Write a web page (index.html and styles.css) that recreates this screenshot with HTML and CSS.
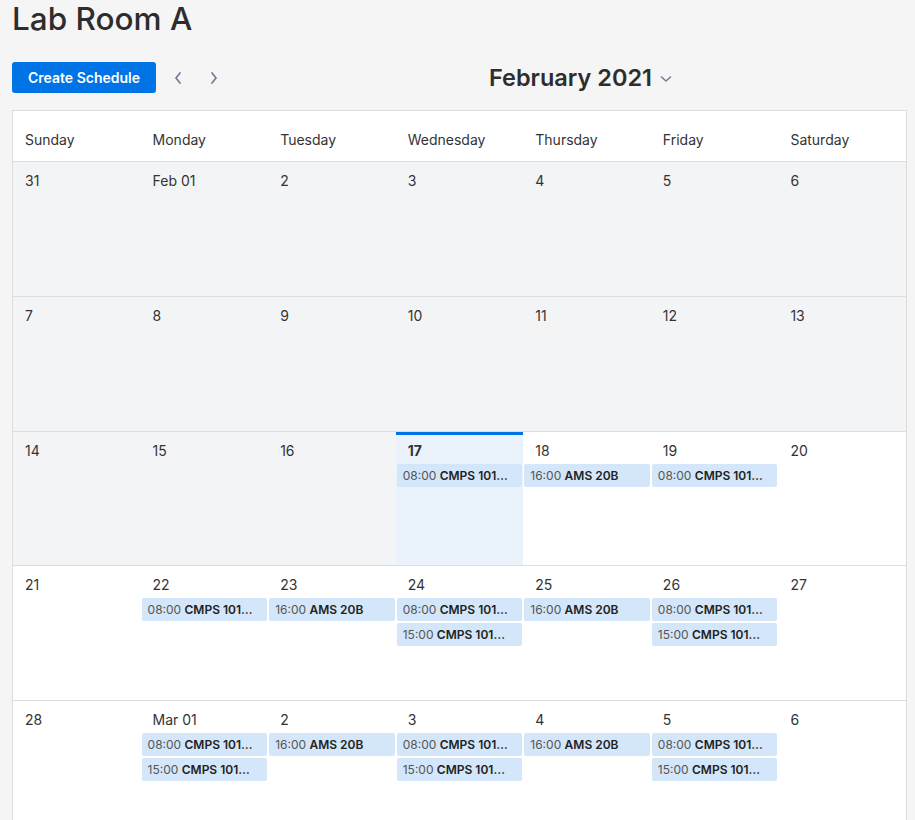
FILE: index.html
```html
<!DOCTYPE html>
<html>
<head>
<meta charset="utf-8">
<link rel="stylesheet" href="styles.css">
</head>
<body>
<h1 class="title">Lab Room A</h1>
<div class="toolbar">
  <button class="btn-primary">Create Schedule</button>
  <button class="nav-btn" aria-label="Previous"><svg width="10" height="14" viewBox="0 0 10 14"><path d="M7 2 L3 7 L7 12" fill="none" stroke="#767d97" stroke-width="1.8" stroke-linecap="round" stroke-linejoin="round"/></svg></button>
  <button class="nav-btn" aria-label="Next"><svg width="10" height="14" viewBox="0 0 10 14"><path d="M3 2 L7 7 L3 12" fill="none" stroke="#767d97" stroke-width="1.8" stroke-linecap="round" stroke-linejoin="round"/></svg></button>
  <div class="month">February 2021 <svg class="caret" width="14" height="10" viewBox="0 0 14 10"><path d="M2.5 3 L7 7 L11.5 3" fill="none" stroke="#767d97" stroke-width="1.6" stroke-linecap="round" stroke-linejoin="round"/></svg></div>
</div>
<div class="calendar">
  <div class="head">
    <div class="hcell">Sunday</div><div class="hcell">Monday</div><div class="hcell">Tuesday</div><div class="hcell">Wednesday</div><div class="hcell">Thursday</div><div class="hcell">Friday</div><div class="hcell">Saturday</div>
  </div>
  <div class="week">
    <div class="day past"><div class="num">31</div></div>
    <div class="day past"><div class="num">Feb 01</div></div>
    <div class="day past"><div class="num">2</div></div>
    <div class="day past"><div class="num">3</div></div>
    <div class="day past"><div class="num">4</div></div>
    <div class="day past"><div class="num">5</div></div>
    <div class="day past"><div class="num">6</div></div>
  </div>
  <div class="week">
    <div class="day past"><div class="num">7</div></div>
    <div class="day past"><div class="num">8</div></div>
    <div class="day past"><div class="num">9</div></div>
    <div class="day past"><div class="num">10</div></div>
    <div class="day past"><div class="num">11</div></div>
    <div class="day past"><div class="num">12</div></div>
    <div class="day past"><div class="num">13</div></div>
  </div>
  <div class="week">
    <div class="day past"><div class="num">14</div></div>
    <div class="day past"><div class="num">15</div></div>
    <div class="day past"><div class="num">16</div></div>
    <div class="day today"><div class="num">17</div>
      <div class="event"><span class="time">08:00</span> <b>CMPS 101…</b></div></div>
    <div class="day"><div class="num">18</div>
      <div class="event"><span class="time">16:00</span> <b>AMS 20B</b></div></div>
    <div class="day"><div class="num">19</div>
      <div class="event"><span class="time">08:00</span> <b>CMPS 101…</b></div></div>
    <div class="day"><div class="num">20</div></div>
  </div>
  <div class="week">
    <div class="day"><div class="num">21</div></div>
    <div class="day"><div class="num">22</div>
      <div class="event"><span class="time">08:00</span> <b>CMPS 101…</b></div></div>
    <div class="day"><div class="num">23</div>
      <div class="event"><span class="time">16:00</span> <b>AMS 20B</b></div></div>
    <div class="day"><div class="num">24</div>
      <div class="event"><span class="time">08:00</span> <b>CMPS 101…</b></div>
      <div class="event"><span class="time">15:00</span> <b>CMPS 101…</b></div></div>
    <div class="day"><div class="num">25</div>
      <div class="event"><span class="time">16:00</span> <b>AMS 20B</b></div></div>
    <div class="day"><div class="num">26</div>
      <div class="event"><span class="time">08:00</span> <b>CMPS 101…</b></div>
      <div class="event"><span class="time">15:00</span> <b>CMPS 101…</b></div></div>
    <div class="day"><div class="num">27</div></div>
  </div>
  <div class="week">
    <div class="day"><div class="num">28</div></div>
    <div class="day"><div class="num">Mar 01</div>
      <div class="event"><span class="time">08:00</span> <b>CMPS 101…</b></div>
      <div class="event"><span class="time">15:00</span> <b>CMPS 101…</b></div></div>
    <div class="day"><div class="num">2</div>
      <div class="event"><span class="time">16:00</span> <b>AMS 20B</b></div></div>
    <div class="day"><div class="num">3</div>
      <div class="event"><span class="time">08:00</span> <b>CMPS 101…</b></div>
      <div class="event"><span class="time">15:00</span> <b>CMPS 101…</b></div></div>
    <div class="day"><div class="num">4</div>
      <div class="event"><span class="time">16:00</span> <b>AMS 20B</b></div></div>
    <div class="day"><div class="num">5</div>
      <div class="event"><span class="time">08:00</span> <b>CMPS 101…</b></div>
      <div class="event"><span class="time">15:00</span> <b>CMPS 101…</b></div></div>
    <div class="day"><div class="num">6</div></div>
  </div>
</div>
</body>
</html>
```
FILE: styles.css
```css
* { box-sizing: border-box; }
html, body { margin: 0; }
body {
  background: #f5f5f5;
  font-family: Inter, "Noto Sans", sans-serif;
  color: #333;
  padding: 0 8px 0 12px;
  overflow: hidden;
}
.title {
  margin: 0;
  padding-top: 0;
  font-size: 31.5px;
  line-height: 38px;
  font-weight: 500;
  color: #2d2d2d;
}
.toolbar {
  display: flex;
  align-items: center;
  margin-top: 24px;
  height: 31px;
}
.btn-primary {
  background: #0073e6;
  color: #fff;
  border: none;
  border-radius: 3px;
  height: 31px;
  padding: 0 16px;
  font-family: inherit;
  font-size: 14px;
  font-weight: 600;
}
.nav-btn {
  background: none;
  border: none;
  padding: 0;
  width: 36px;
  height: 31px;
  display: flex;
  align-items: center;
  justify-content: center;
}
.btn-primary + .nav-btn { margin-left: 4px; }
.month {
  margin-left: 257px;
  font-size: 23.5px;
  font-weight: 600;
  color: #2d2d2d;
  display: flex;
  align-items: center;
  gap: 7px;
}
.caret { margin-top: 2px; }
.calendar {
  margin-top: 17px;
  width: 895px;
  background: #fff;
  border: 1px solid #ddd;
}
.head, .week {
  display: grid;
  grid-template-columns: repeat(7, 1fr);
}
.hcell {
  height: 50px;
  padding: 20px 0 0 12px;
  font-size: 14px;
  line-height: 18px;
  color: #333;
}
.week { border-top: 1px solid #ddd; height: 134.8px; }
.head { height: 50px; }
.day {
  padding-top: 10px;
  overflow: hidden;
}
.day.past { background: #f3f4f6; }
.day.today { background: #eaf2fc; border-top: 3px solid #0073e6; padding-top: 7px; }
.today .num { font-weight: 700; }
.num {
  padding-left: 12px;
  font-size: 14px;
  line-height: 18px;
  height: 18px;
  color: #333;
  margin-bottom: 4px;
}
.event {
  margin: 0 1px 2px;
  height: 23px;
  line-height: 23px;
  padding-left: 6px;
  background: #d4e6f9;
  border-radius: 2px;
  font-size: 12px;
  color: #222;
  white-space: nowrap;
  overflow: hidden;
}
.event .time { color: #555; }
.event b { font-weight: 600; }
```
